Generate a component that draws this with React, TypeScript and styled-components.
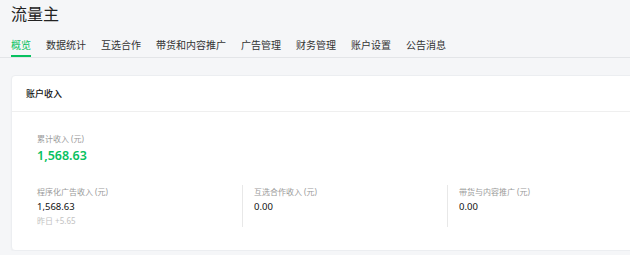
import React from 'react';
import styled, { createGlobalStyle } from 'styled-components';

const GlobalStyle = createGlobalStyle`
  html, body {
    margin: 0;
    padding: 0;
    background: #f5f6f8;
    overflow: hidden;
  }
  body {
    font-family: "Noto Sans", "Noto Sans CJK SC", sans-serif;
    color: #1f2329;
  }
`;

const Page = styled.div`
  width: 680px;
  padding: 3px 0 0 11px;
`;

const Title = styled.h1`
  margin: 0;
  font-size: 16px;
  line-height: 22px;
  font-weight: 400;
  color: #222;
`;

const TabBar = styled.nav`
  display: flex;
  gap: 15px;
  margin-top: 11px;
  margin-left: -11px;
  padding-left: 11px;
  border-bottom: 1px solid #e3e5e8;
`;

const Tab = styled.span<{ $active?: boolean }>`
  font-size: 10px;
  line-height: 14px;
  padding: 2px 0 3px;
  color: ${(p) => (p.$active ? '#07c160' : '#333')};
  border-bottom: 2px solid ${(p) => (p.$active ? '#07c160' : 'transparent')};
`;

const Card = styled.section`
  box-sizing: border-box;
  margin-top: 17px;
  background: #fff;
  border: 1px solid #eceef1;
  border-radius: 4px;
  box-shadow: 0 1px 2px rgba(0, 0, 0, 0.03);
  height: 176px;
`;

const CardHeader = styled.header`
  height: 35px;
  display: flex;
  align-items: center;
  padding: 0 14px;
  border-bottom: 1px solid #efefef;
  font-size: 9px;
  font-weight: 500;
  color: #111;
`;

const CardBody = styled.div`
  padding: 21px 25px 0;
`;

const Label = styled.div`
  font-size: 8px;
  line-height: 12px;
  color: #9a9a9a;
`;

const Total = styled.div`
  margin-top: 3px;
  font-size: 12.5px;
  line-height: 16px;
  font-weight: 600;
  color: #07c160;
`;

const Grid = styled.div`
  display: grid;
  grid-template-columns: repeat(3, 205px);
  margin-top: 21px;
`;

const Col = styled.div<{ $divider?: boolean }>`
  box-sizing: border-box;
  height: 42px;
  padding-left: ${(p) => (p.$divider ? '11px' : '0')};
  border-left: ${(p) => (p.$divider ? '1px solid #e8e8e8' : 'none')};
  padding-top: 1px;
`;

const Value = styled.div`
  font-size: 9.5px;
  line-height: 13px;
  margin-top: 2px;
  color: #111;
`;

const Sub = styled.div`
  font-size: 8px;
  line-height: 12px;
  margin-top: 2px;
  color: #c2c2c2;
`;

const tabs = ['概览', '数据统计', '互选合作', '带货和内容推广', '广告管理', '财务管理', '账户设置', '公告消息'];

const cols = [
  { label: '程序化广告收入 (元)', value: '1,568.63', sub: '昨日 +5.65' },
  { label: '互选合作收入 (元)', value: '0.00' },
  { label: '带货与内容推广 (元)', value: '0.00' },
];

export default function App() {
  return (
    <>
      <GlobalStyle />
      <Page>
        <Title>流量主</Title>
        <TabBar>
          {tabs.map((t, i) => (
            <Tab key={t} $active={i === 0}>
              {t}
            </Tab>
          ))}
        </TabBar>
        <Card>
          <CardHeader>账户收入</CardHeader>
          <CardBody>
            <Label>累计收入 (元)</Label>
            <Total>1,568.63</Total>
            <Grid>
              {cols.map((c, i) => (
                <Col key={c.label} $divider={i > 0}>
                  <Label>{c.label}</Label>
                  <Value>{c.value}</Value>
                  {c.sub && <Sub>{c.sub}</Sub>}
                </Col>
              ))}
            </Grid>
          </CardBody>
        </Card>
      </Page>
    </>
  );
}
